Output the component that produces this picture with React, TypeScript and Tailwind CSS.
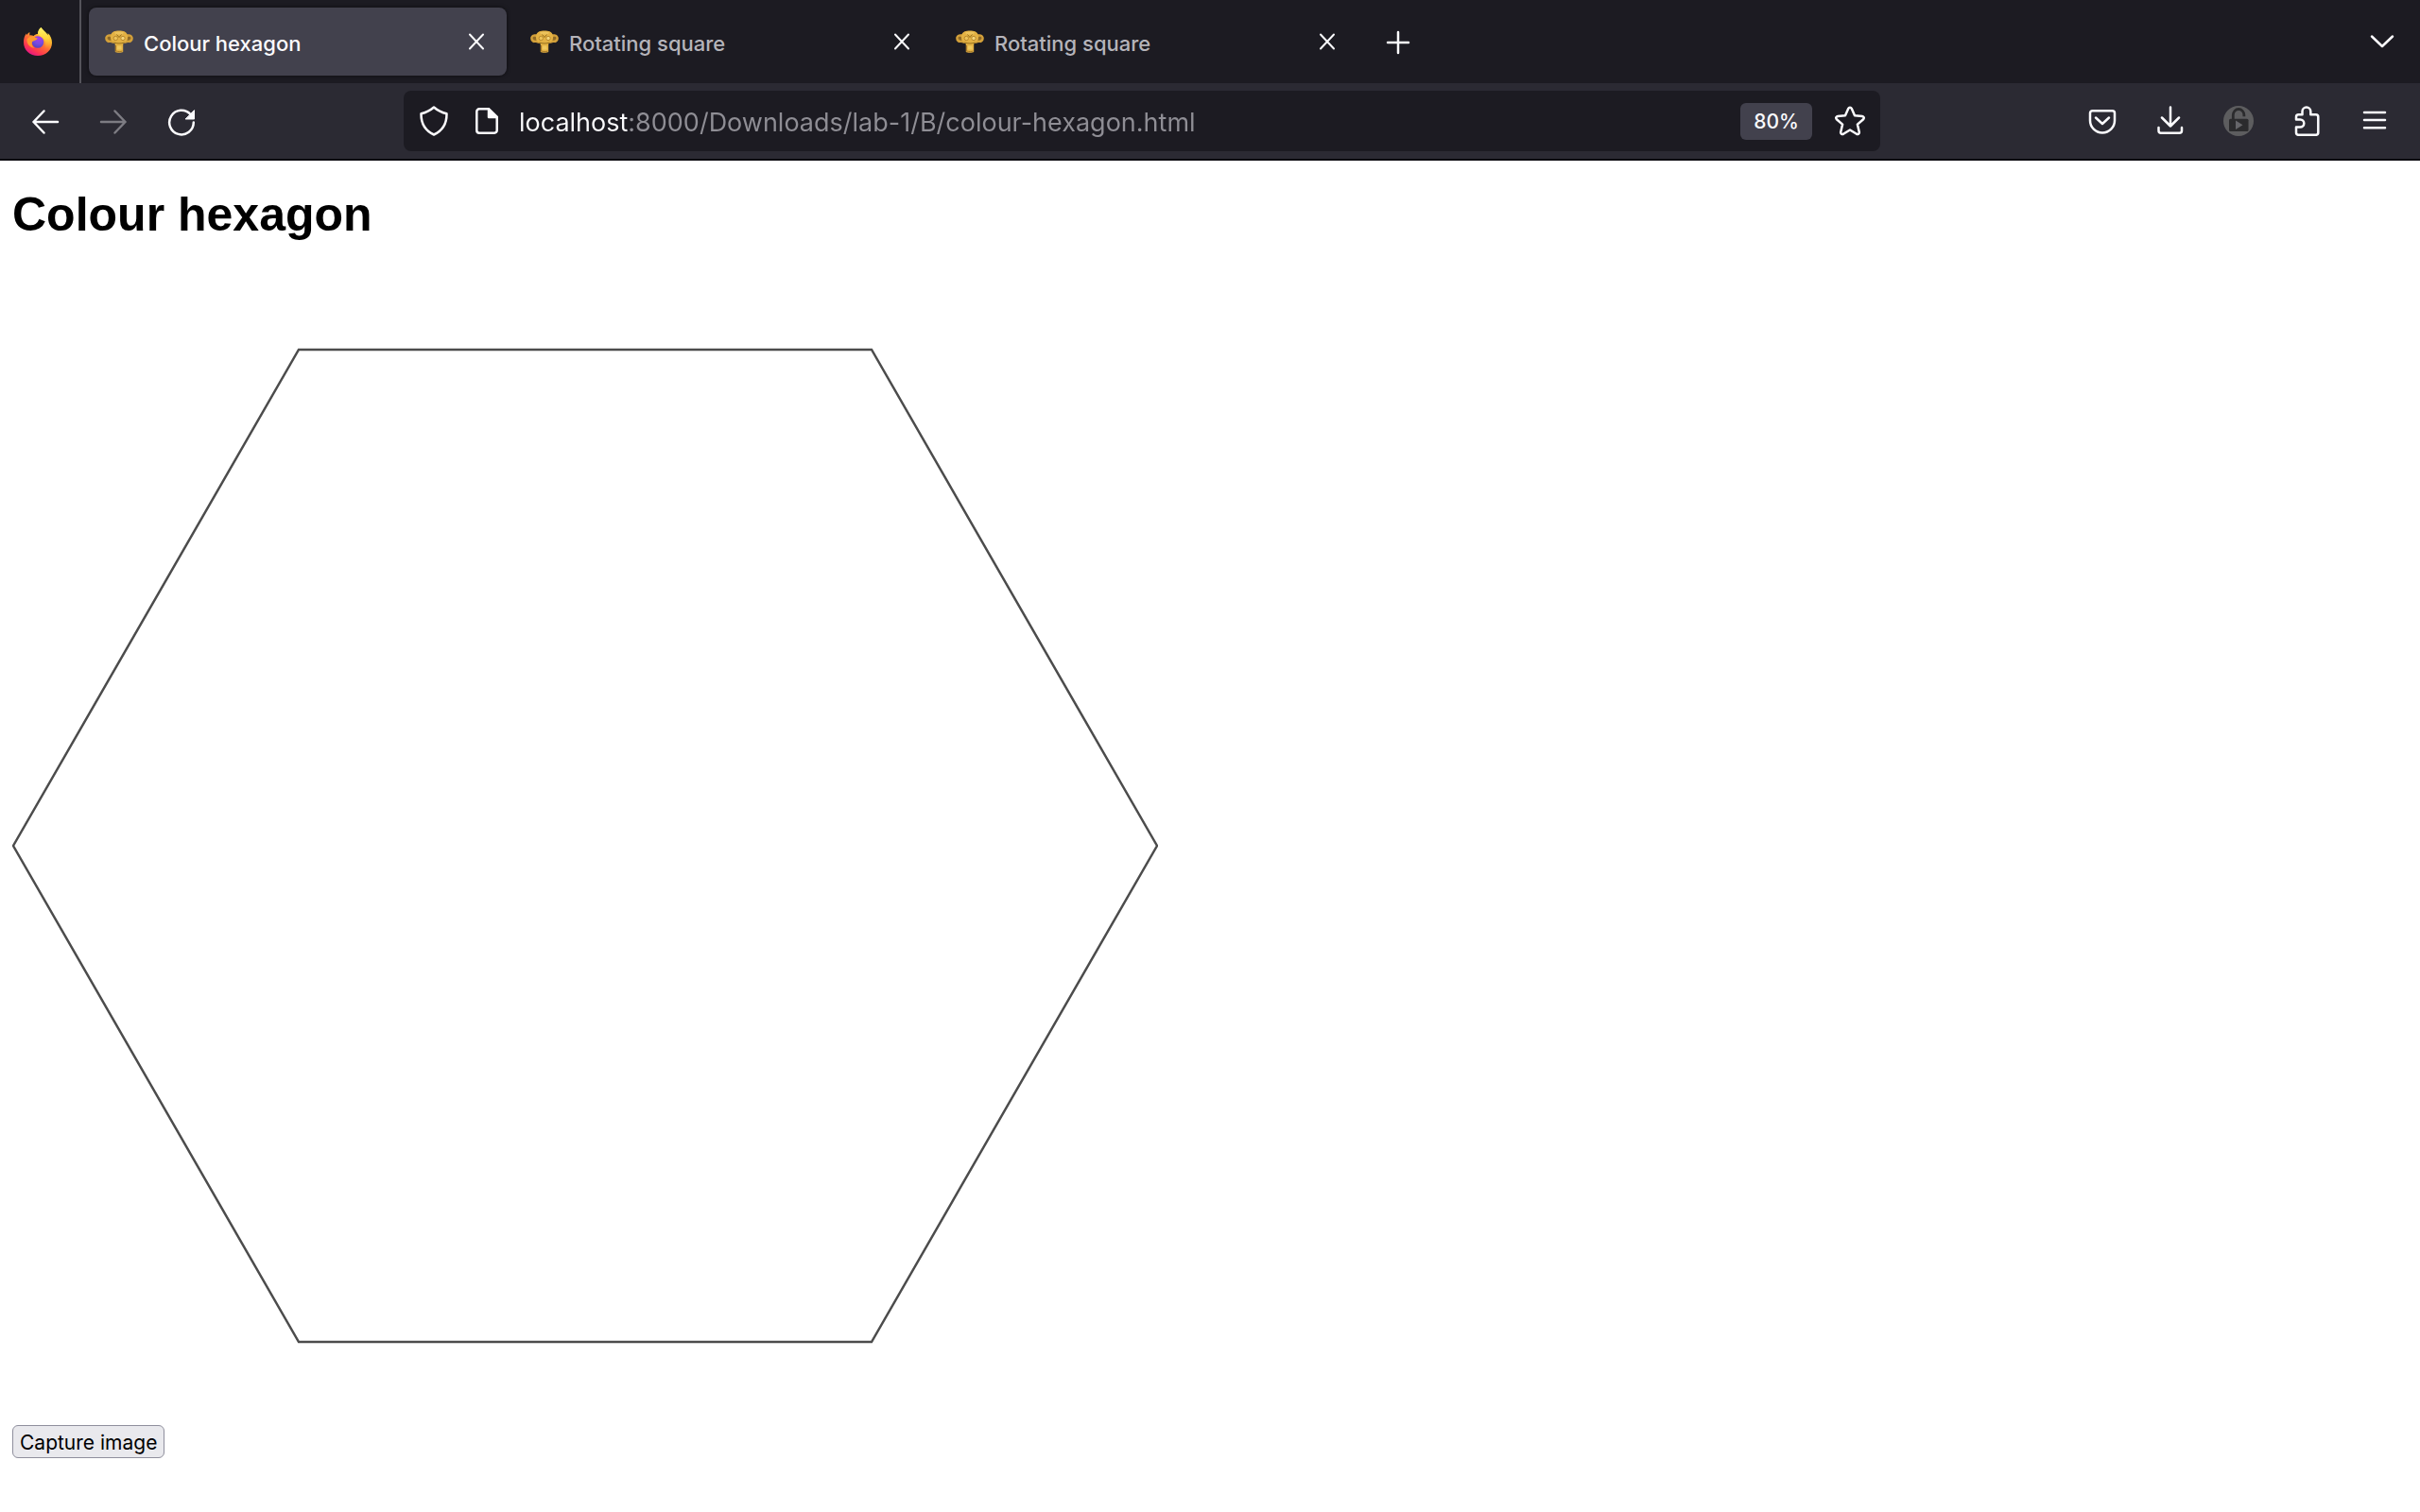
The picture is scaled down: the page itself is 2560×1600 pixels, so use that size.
import type { ReactNode } from 'react';

const TABS = [
  { title: 'Colour hexagon', active: true },
  { title: 'Rotating square', active: false },
  { title: 'Rotating square', active: false },
];

function Glyph({ children, className = 'size-8' }: { children: ReactNode; className?: string }) {
  return (
    <svg
      viewBox="0 0 32 32"
      className={className}
      fill="none"
      stroke="currentColor"
      strokeWidth="2.5"
      strokeLinecap="round"
      strokeLinejoin="round"
      aria-hidden="true"
    >
      {children}
    </svg>
  );
}

function FirefoxLogo() {
  return (
    <svg viewBox="0 0 32 32" className="size-8" aria-hidden="true">
      <defs>
        <linearGradient id="fx-body" x1="0.85" y1="0.1" x2="0.3" y2="1">
          <stop offset="0" stopColor="#ffe847" />
          <stop offset="0.3" stopColor="#ffb72e" />
          <stop offset="0.55" stopColor="#ff6b36" />
          <stop offset="0.8" stopColor="#ff3750" />
          <stop offset="1" stopColor="#e31587" />
        </linearGradient>
        <linearGradient id="fx-flame" x1="0.5" y1="0" x2="0.5" y2="1">
          <stop offset="0" stopColor="#fff36b" />
          <stop offset="0.5" stopColor="#ffd43a" />
          <stop offset="1" stopColor="#ff8a2a" stopOpacity="0" />
        </linearGradient>
        <radialGradient id="fx-globe" cx="0.6" cy="0.2" r="0.9">
          <stop offset="0" stopColor="#a63cf0" />
          <stop offset="0.5" stopColor="#7a4be0" />
          <stop offset="1" stopColor="#4a44b8" />
        </radialGradient>
      </defs>
      <path
        d="M19.5 1c1.300 2.300 3 3.600 4.700 5.200 1 1 1.700 2 2.200 3 .3-.6.300-1.400.200-2.200 3.200 3 4.400 6.600 4.400 10.300C31 25 24.400 31 16 31S1 25 1 16.700c0-3.300.8-6.500 2.900-9.200l.5 1.400c.7-1.400 1.700-2.400 3-3l-.1 3.500c1.600-.2 3 .1 4.300.7C13 8.500 14.500 8 16 8c0-2.800 1.400-5.400 3.500-7z"
        fill="url(#fx-body)"
      />
      <path
        d="M19.500 1c1.300 2.300 3 3.600 4.700 5.200C27.500 9.500 29 13 28.500 17c-.5 3.500-2.500 6-5 7.500 1-4 1-8-1-11-1.500-2.300-4.500-3.500-6.500-5.500 0-2.800 1.400-5.400 3.500-7z"
        fill="url(#fx-flame)"
      />
      <circle cx="16" cy="16.500" r="6.300" fill="url(#fx-globe)" />
      <path
        d="M4.500 13.500c2-2.500 5-3.500 8-2.500 1 .8 1.600 1.200 3.200 1.300-.3 1.500-1.700 2.100-3.200 2.700-1 .5-2.200.8-2.500 1.500-1 3 .5 5 2.500 6.300-4.500-.3-8.500-4-8-9.300z"
        fill="#ff9a2e"
      />
    </svg>
  );
}

function MonkeyIcon() {
  return (
    <svg viewBox="0 0 32 32" className="size-8 shrink-0" aria-hidden="true">
      <path
        d="M9 8.500C5.500 7.500 1.200 8.500 1.200 12.500c0 3 2.300 5 4.300 4.600 1.500-.3 2.500.6 4 .7l13 0c1.500-.1 2.500-1 4-.7 2 .4 4.300-1.600 4.300-4.600 0-4-4.300-5-7.800-4z"
        fill="#d3a03a"
      />
      <path d="M3.500 12c.3-1.200 1.800-1.600 3.300-1.100l1 3.600C5.800 15 3.800 14.300 3.500 12zM28.500 12c-.3-1.200-1.800-1.600-3.300-1.100l-1 3.600c2 .5 4-.2 4.300-2.500z" fill="#8f6a26" />
      <path
        d="M10.500 5.300C13 4.200 19 4.200 21.500 5.300c2.300 1 3.500 3.200 3.500 6 0 3-1.300 4.800-3.500 5.700-1 .5-1.300 1.500-1.300 3v7c-1 1-7.400 1-8.400 0v-7c0-1.500-.3-2.500-1.300-3C8.300 16.100 7 14.300 7 11.300c0-2.800 1.200-5 3.500-6z"
        fill="#e3b143"
      />
      <path d="M11 6.200c2.500-1 7.500-1 10 0l-1.500 2.300h-7z" fill="#ebc25c" />
      <circle cx="12.300" cy="12.500" r="2.200" fill="#edc35a" stroke="#b98a2f" strokeWidth="1" />
      <circle cx="20" cy="12.500" r="2.200" fill="#f5d67a" stroke="#b98a2f" strokeWidth="1" />
      <path d="M13.500 8.500l2.500 3 2.500-3M10.500 17c3 1.300 8 1.300 11 0" stroke="#96701f" strokeWidth="1" fill="none" />
      <path d="M14 20.500h4.300l.4 4h-5z" fill="#f0c95e" />
      <path d="M12.500 20v6.500M13 26c2 .8 4.500.8 6.500 0" stroke="#a87a28" strokeWidth="1" fill="none" />
    </svg>
  );
}

function CloseIcon() {
  return (
    <Glyph>
      <path d="M9 8.500 23 23.500M23 8.500 9 23.500" strokeWidth="2" />
    </Glyph>
  );
}

function ToolButton({ label, disabled, children }: { label: string; disabled?: boolean; children: ReactNode }) {
  return (
    <button
      type="button"
      aria-label={label}
      disabled={disabled}
      className="flex size-16 shrink-0 items-center justify-center rounded-lg text-[#fbfbfe] disabled:text-[#7d7c83]"
    >
      {children}
    </button>
  );
}

function TabStrip() {
  return (
    <div className="flex h-[88px] items-stretch bg-[#1c1b22]">
      <button
        type="button"
        aria-label="Firefox View"
        className="flex w-[86px] shrink-0 items-center border-r-2 border-[#54535a] pl-6"
      >
        <FirefoxLogo />
      </button>
      <div role="tablist" className="flex items-center gap-2 pl-2">
        {TABS.map((tab, i) => (
          <div
            key={i}
            className={
              'flex h-[72px] w-[442px] items-center rounded-lg pr-4 pl-4 ' +
              (tab.active ? 'bg-[#42414d] text-[#fbfbfe] shadow-[0_0_4px_rgba(0,0,0,0.6)]' : 'text-[#b5b4ba]')
            }
          >
            <button
              type="button"
              role="tab"
              aria-selected={tab.active}
              className="flex h-full min-w-0 flex-1 items-center gap-[10px] text-left text-[22px] font-medium"
            >
              <MonkeyIcon />
              <span className="truncate pt-1">{tab.title}</span>
            </button>
            <button type="button" aria-label={'Close ' + tab.title} className="text-[#fbfbfe]">
              <CloseIcon />
            </button>
          </div>
        ))}
      </div>
      <button type="button" aria-label="New tab" className="ml-[27px] text-[#fbfbfe]">
        <Glyph>
          <path d="M16 6v22M5 17h22" />
        </Glyph>
      </button>
      <button type="button" aria-label="List all tabs" className="mr-6 ml-auto text-[#fbfbfe]">
        <Glyph>
          <path d="M5 10.500 16 21 27 10.500" />
        </Glyph>
      </button>
    </div>
  );
}

function Toolbar() {
  return (
    <div className="flex h-[82px] items-center border-b-2 border-[#0c0b10] bg-[#2b2a33] px-4">
      <div className="flex gap-2">
        <ToolButton label="Back">
          <Glyph>
            <path d="M29 17H3.500M14.500 5.500 3.500 17l11 11.500" />
          </Glyph>
        </ToolButton>
        <ToolButton label="Forward" disabled>
          <Glyph>
            <path d="M3 17h25.500M17.500 5.500 28.500 17l-11 11.500" />
          </Glyph>
        </ToolButton>
        <ToolButton label="Reload">
          <Glyph>
            <path d="M25.500 9A12.800 12.800 0 1 0 28.800 17.500" />
            <path d="M29.500 5v9h-9z" fill="currentColor" strokeWidth="1" />
          </Glyph>
        </ToolButton>
      </div>
      <div className="flex-[13]" />
      <div className="flex h-16 min-w-0 flex-[98] items-center rounded-lg bg-[#1c1b22] px-4 text-[#fbfbfe]">
        <button type="button" aria-label="Tracking protection">
          <Glyph>
            <path d="M16 1.500C12.500 4.500 8 7 2.500 8.300c-.2 10.500 3.500 17.500 13.500 22.200 10-4.700 13.700-11.700 13.500-22.200C24 7 19.500 4.500 16 1.500z" />
          </Glyph>
        </button>
        <button type="button" aria-label="Site information" className="ml-6">
          <Glyph>
            <path d="M8 3.300h10l8.700 8.700v14a2.700 2.700 0 0 1-2.700 2.700H8A2.700 2.700 0 0 1 5.300 26V6A2.700 2.700 0 0 1 8 3.300z" />
            <path d="M18 3.300V12h8.700z" fill="currentColor" />
          </Glyph>
        </button>
        <input
          type="text"
          aria-label="Address"
          defaultValue="localhost:8000/Downloads/lab-1/B/colour-hexagon.html"
          className="ml-[18px] h-full min-w-0 flex-1 bg-[linear-gradient(to_right,#fbfbfe_115px,#8f8e95_115px)] bg-clip-text pt-0.5 text-[27px] text-transparent caret-white outline-none"
        />
        <button
          type="button"
          className="h-[39px] w-[76px] shrink-0 rounded-md bg-[#42414d] pt-0.5 text-[21px] font-medium"
        >
          80%
        </button>
        <button type="button" aria-label="Bookmark this page" className="ml-6">
          <Glyph>
            <path d="M14.300 2.700a1.900 1.900 0 0 1 3.400 0l3.300 7.500 8 .7a1.900 1.900 0 0 1 1.100 3.300l-6.200 5.400 1.900 8.200a1.900 1.900 0 0 1-2.800 2L16 25.500l-7 4.300a1.900 1.900 0 0 1-2.800-2l1.900-8.200-6.200-5.400a1.900 1.900 0 0 1 1.100-3.300l8-.7z" />
          </Glyph>
        </button>
      </div>
      <div className="flex-[13]" />
      <div className="flex gap-2">
        <ToolButton label="Save to Pocket">
          <Glyph>
            <path d="M5.500 5.200h21a2.500 2.500 0 0 1 2.500 2.500V15.500a13 13 0 0 1-26 0V7.700a2.500 2.500 0 0 1 2.500-2.500z" />
            <path d="M9 12.500l7 6.500 7-6.500" />
          </Glyph>
        </ToolButton>
        <ToolButton label="Downloads">
          <Glyph>
            <path d="M16 1.500v20M7 12.500l9 9 9-9M3.500 23v3.300a2.500 2.500 0 0 0 2.500 2.500h19.500a2.500 2.500 0 0 0 2.500-2.500V23" />
          </Glyph>
        </ToolButton>
        <ToolButton label="Unlock extension">
          <svg viewBox="0 0 32 32" className="size-8" aria-hidden="true">
            <circle cx="16" cy="16" r="16" fill="#5d5d5f" />
            <path d="M10.300 15V9.800a5.800 6.300 0 0 1 11.600 0v1.400" fill="none" stroke="#2b2b2d" strokeWidth="2.800" />
            <rect x="6" y="13.800" width="20.500" height="13.200" rx="1.500" fill="#2b2b2d" />
            <path d="M13 15.500v9.500l7.500-4.700z" fill="#66666a" />
          </svg>
        </ToolButton>
        <ToolButton label="Extensions">
          <Glyph>
            <path d="M11.500 9.300V6a4.400 4.400 0 0 1 8.800 0v3.300h5.500a2.500 2.500 0 0 1 2.500 2.500v16.500a2.500 2.500 0 0 1-2.500 2.500H7.500A2.500 2.500 0 0 1 5 28.300v-5.800h4.300a4 4 0 0 0 0-8H5v-2.700a2.500 2.500 0 0 1 2.500-2.500z" />
          </Glyph>
        </ToolButton>
        <ToolButton label="Open application menu">
          <Glyph>
            <path d="M5 7h22M5 15h22M5 23.300h22" />
          </Glyph>
        </ToolButton>
      </div>
    </div>
  );
}

export default function App() {
  return (
    <div className="min-h-screen bg-white font-['Inter',sans-serif] text-black">
      <header>
        <TabStrip />
        <Toolbar />
      </header>
      <main className="flex flex-col items-start px-[13px] pt-7">
        <h1 className="font-['Liberation_Sans',sans-serif] text-[50px] leading-[58px] font-bold">Colour hexagon</h1>
        <svg viewBox="0 0 1212 1212" className="mt-[33px] h-[1212px] w-[1212px]" role="img" aria-label="Hexagon outline">
          <polygon
            points="303,81 909,81 1211,606 909,1131 303,1131 1,606"
            fill="none"
            stroke="#4c4c4c"
            strokeWidth="2.5"
          />
        </svg>
        <button
          type="button"
          className="mt-[7px] h-[35px] rounded-md border border-[#8f8f9d] bg-[#e9e9ed] px-[7px] pt-0.5 text-[21px] leading-6"
        >
          Capture image
        </button>
      </main>
    </div>
  );
}
